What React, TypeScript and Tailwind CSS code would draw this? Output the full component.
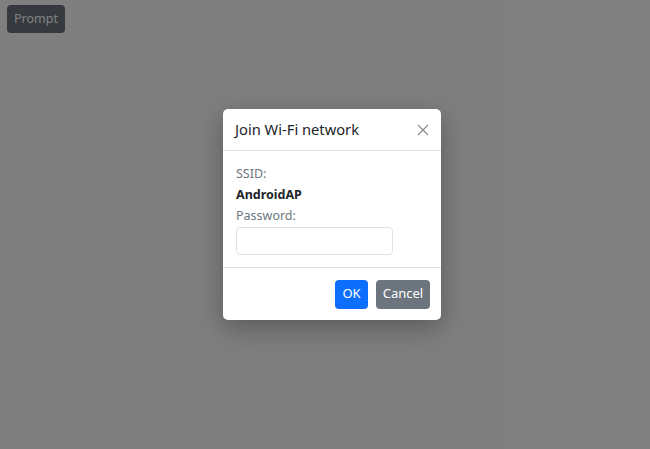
import React from 'react';

export default function App() {
  return (
    <div className="relative w-[650px] h-[449px] bg-white overflow-hidden" style={{ fontFamily: '"Noto Sans", "Open Sans", sans-serif' }}>
      <div className="p-[7px] pt-[5px]">
        <button className="h-[28px] w-[58px] rounded-[4px] bg-[#6c757d] text-white text-[12.5px]">Prompt</button>
      </div>

      {/* backdrop + modal */}
      <div className="absolute inset-0 bg-black/50 flex items-center justify-center pl-[14px] pb-[20px]">
        <div className="w-[218px] bg-white rounded-[5px] shadow-[0_8px_28px_rgba(0,0,0,0.3)] text-[#212529]">
          <div className="h-[42px] flex items-center justify-between pl-[12px] pr-[11px] border-b border-[#dee2e6]">
            <h5 className="text-[14.7px] leading-none">Join Wi-Fi network</h5>
            <button className="w-[14px] h-[14px] flex items-center justify-center text-[#8a8d90]">
              <svg width="12" height="12" viewBox="0 0 12 12" fill="none" stroke="currentColor" strokeWidth="1.2">
                <path d="M1 1L11 11M11 1L1 11" />
              </svg>
            </button>
          </div>
          <div className="pl-[13px] pr-[12px] pt-[12px] pb-[12px] text-[12.5px] leading-[21px]">
            <div className="text-[#6c757d]">SSID:</div>
            <div className="font-bold">AndroidAP</div>
            <div className="text-[#6c757d]">Password:</div>
            <input type="password" className="mt-[1px] w-[157px] h-[28px] border border-[#dee2e6] rounded-[4px] outline-none" />
          </div>
          <div className="h-[53px] flex items-center justify-end gap-[8px] pr-[11px] border-t border-[#dee2e6]">
            <button className="h-[29px] w-[33px] rounded-[4px] bg-[#0d6efd] text-white text-[13px]">OK</button>
            <button className="h-[29px] w-[54px] rounded-[4px] bg-[#6c757d] text-white text-[13px]">Cancel</button>
          </div>
        </div>
      </div>
    </div>
  );
}
